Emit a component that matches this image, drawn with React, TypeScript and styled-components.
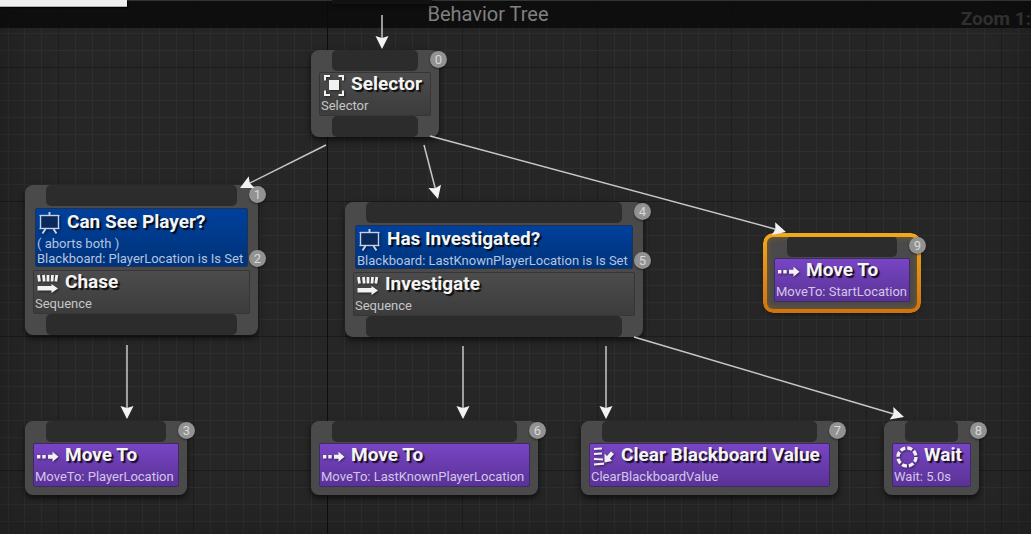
import React from "react";
import styled, { createGlobalStyle, css } from "styled-components";

const GlobalStyle = createGlobalStyle`
  *, *::before, *::after { box-sizing: border-box; }
  body {
    margin: 0;
    background: #262626;
    font-family: Roboto, "Liberation Sans", sans-serif;
  }
`;

const Editor = styled.main`
  position: relative;
  min-height: 100vh;
  overflow: hidden;
  background: #262626;
`;

const CanvasLayer = styled.svg`
  position: absolute;
  inset: 0;
  width: 100%;
  height: 100%;
  pointer-events: none;
`;

const Vignette = styled.div`
  position: absolute;
  inset: 0;
  pointer-events: none;
  box-shadow: inset 0 0 48px rgba(0, 0, 0, 0.28);
`;

const TitleBar = styled.header`
  position: relative;
  display: flex;
  justify-content: center;
  height: 28px;
  padding-right: 55px;
  border-top: 1px solid #333333;
  background: rgba(10, 10, 10, 0.82);
`;

const Title = styled.h1`
  margin: 0;
  font-size: 20px;
  font-weight: 400;
  line-height: 26px;
  color: #808080;
`;

const ZoomLabel = styled.span`
  position: absolute;
  top: 5px;
  right: 0;
  font-size: 19px;
  font-weight: 700;
  line-height: 26px;
  color: #303030;
`;

const MenuEdge = styled.div`
  position: absolute;
  top: 0;
  left: 0;
  width: 127px;
  height: 7px;
  border-bottom: 1px solid #b0b0b0;
  background: #eeeeee;
  box-shadow: 1px 1px 1px #000000;
`;

const RootEdge = styled.div`
  position: absolute;
  top: 0;
  left: 332px;
  width: 100px;
  height: 4px;
  background: #121212;
  box-shadow: 0 2px 4px #080808;
`;

const NodeCard = styled.article<{ $x: number; $y: number; $w: number; $selected?: boolean }>`
  position: absolute;
  left: ${(p) => p.$x}px;
  top: ${(p) => p.$y}px;
  width: ${(p) => p.$w}px;
  display: flex;
  flex-direction: column;
  padding: 0 8px;
  border-radius: 8px;
  background: #4a4a4a;
  box-shadow: 0 3px 6px rgba(0, 0, 0, 0.65);
  ${(p) =>
    p.$selected &&
    css`
      &::before {
        content: "";
        position: absolute;
        inset: -3px;
        border: 4px solid transparent;
        border-radius: 10px;
        background: linear-gradient(#f2a81c, #d0720f) border-box;
        mask: linear-gradient(#000 0 0) padding-box exclude, linear-gradient(#000 0 0);
      }
      box-shadow: inset 0 0 5px 2px #75592c, 0 3px 6px rgba(0, 0, 0, 0.65);
    `}
`;

const Pin = styled.div`
  height: 21px;
  margin: 0 13px;
  border-radius: 5px;
  background: #2c2c2c;
`;

const Stack = styled.div<{ $leaf?: boolean }>`
  display: flex;
  flex-direction: column;
  gap: 3px;
  padding: 1px 0 ${(p) => (p.$leaf ? 8 : 0)}px;
`;

type Tone = "service" | "plain" | "task";

const tones: Record<Tone, ReturnType<typeof css>> = {
  service: css`
    margin: 1px 2px 0;
    padding: 2px 1px 0;
    border-color: #1d3159;
    background: linear-gradient(#00409c, #003379);
    color: #b4c4e2;
  `,
  plain: css`
    border-color: #363636;
    background: linear-gradient(#4c4c4c, #3c3c3c);
    color: #c6c6c6;
  `,
  task: css`
    border-color: #3f2a66;
    background: linear-gradient(#7845c4, #5a3296);
    color: #d3c6ea;
  `,
};

const Panel = styled.section<{ $tone: Tone }>`
  position: relative;
  padding: 0 1px 2px;
  border: 1px solid;
  border-radius: 2px;
  ${(p) => tones[p.$tone]}
`;

const Heading = styled.div`
  display: flex;
  align-items: center;
  gap: 7px;
  height: 24px;
  margin-bottom: 1px;
  padding-left: 1px;
`;

const Name = styled.h2`
  margin: 0;
  padding-bottom: 2px;
  font-size: 19px;
  font-weight: 700;
  line-height: 22px;
  white-space: nowrap;
  color: #f4f4f4;
  text-shadow: 2px 2px 1px rgba(0, 0, 0, 0.8);
`;

const Detail = styled.p`
  margin: 0;
  font-size: 13px;
  line-height: 15px;
  white-space: nowrap;
`;

const Index = styled.span<{ $low?: boolean }>`
  position: absolute;
  top: ${(p) => (p.$low ? "auto" : "1px")};
  bottom: ${(p) => (p.$low ? "-1px" : "auto")};
  right: ${(p) => (p.$low ? "-19px" : "-8px")};
  width: 17px;
  height: 17px;
  border-radius: 50%;
  background: #929292;
  box-shadow: 0 1px 2px rgba(0, 0, 0, 0.5);
  font-size: 13px;
  line-height: 17px;
  text-align: center;
  color: #d8d8d8;
`;

const Glyph = styled.svg`
  flex: none;
  width: 22px;
  height: 22px;
  overflow: visible;
  filter: drop-shadow(1px 1px 1px rgba(0, 0, 0, 0.5));
`;

type IconName = "selector" | "board" | "sequence" | "move" | "clear" | "wait";

function Icon({ name }: { name: IconName }) {
  const white = "#f2f2f2";
  switch (name) {
    case "selector":
      return (
        <Glyph viewBox="0 0 22 22" aria-hidden="true">
          <rect x="7" y="6" width="10" height="10" fill={white} />
          <path d="M3 6.500V2h5M16.500 2H21v4.500M21 16.500V21h-4.500M8 21H3v-4.500" fill="none" stroke={white} strokeWidth="2" />
        </Glyph>
      );
    case "board":
      return (
        <Glyph viewBox="0 0 22 22" aria-hidden="true">
          <path d="M11.500 0v3M7.500 17l-3 4.500M15.500 17l3 4.500" stroke="#c5d2e8" strokeWidth="2" fill="none" />
          <rect x="2.500" y="3.500" width="18" height="13" fill="#0a2a5e" stroke="#c5d2e8" strokeWidth="1.4" />
          <path d="M1.500 3.500h20M1.500 16.500h20" stroke="#c5d2e8" strokeWidth="1.2" />
        </Glyph>
      );
    case "sequence":
      return (
        <Glyph viewBox="0 0 22 22" aria-hidden="true">
          <path d="M2.500 3l1 6.500M7.500 3l.7 6.500M12 3v6.500M16.500 3l-.5 6.500M20.800 3l-1 6.500" stroke={white} strokeWidth="2.800" fill="none" />
          <path d="M1.500 14h14V12l6.500 4.500l-6.500 4.500v-2.500h-14z" fill={white} />
        </Glyph>
      );
    case "move":
      return (
        <Glyph viewBox="0 0 22 22" aria-hidden="true">
          <path d="M1 10h3.400v3.500H1zM6.300 10h3.400v3.500H6.300zM12 9.800h4.500V6.800l6 5l-6 5V13.800H12z" fill={white} />
        </Glyph>
      );
    case "clear":
      return (
        <Glyph viewBox="0 0 22 22" aria-hidden="true">
          <path d="M2 4l8-.5M2 9l8-.5M2 14l9 .5M2 19.500l10-.8" stroke={white} strokeWidth="2.200" fill="none" />
          <path d="M12.500 17.500V8.500l2.500 2.500l4-4.500l3 2.500l-4 4.500l2 2.500z" fill={white} />
        </Glyph>
      );
    case "wait":
      return (
        <Glyph viewBox="0 0 22 22" aria-hidden="true">
          <circle cx="12" cy="12" r="9" fill="none" stroke={white} strokeWidth="3.400" strokeDasharray="5.070 2" />
        </Glyph>
      );
  }
}

interface Part {
  tone: Tone;
  icon: IconName;
  name: string;
  details: string[];
  index?: number;
}

interface TreeNode {
  x: number;
  y: number;
  w: number;
  index: number;
  leaf?: boolean;
  selected?: boolean;
  parts: Part[];
}

const nodes: TreeNode[] = [
  { x: 311, y: 50, w: 128, index: 0, parts: [{ tone: "plain", icon: "selector", name: "Selector", details: ["Selector"] }] },
  {
    x: 25, y: 185, w: 233, index: 1,
    parts: [
      { tone: "service", icon: "board", name: "Can See Player?", details: ["( aborts both )", "Blackboard: PlayerLocation is Is Set"], index: 2 },
      { tone: "plain", icon: "sequence", name: "Chase", details: ["Sequence"] },
    ],
  },
  {
    x: 345, y: 202, w: 298, index: 4,
    parts: [
      { tone: "service", icon: "board", name: "Has Investigated?", details: ["Blackboard: LastKnownPlayerLocation is Is Set"], index: 5 },
      { tone: "plain", icon: "sequence", name: "Investigate", details: ["Sequence"] },
    ],
  },
  { x: 766, y: 236, w: 152, index: 9, leaf: true, selected: true, parts: [{ tone: "task", icon: "move", name: "Move To", details: ["MoveTo: StartLocation"] }] },
  { x: 25, y: 421, w: 162, index: 3, leaf: true, parts: [{ tone: "task", icon: "move", name: "Move To", details: ["MoveTo: PlayerLocation"] }] },
  { x: 311, y: 421, w: 227, index: 6, leaf: true, parts: [{ tone: "task", icon: "move", name: "Move To", details: ["MoveTo: LastKnownPlayerLocation"] }] },
  { x: 581, y: 421, w: 257, index: 7, leaf: true, parts: [{ tone: "task", icon: "clear", name: "Clear Blackboard Value", details: ["ClearBlackboardValue"] }] },
  { x: 884, y: 421, w: 95, index: 8, leaf: true, parts: [{ tone: "task", icon: "wait", name: "Wait", details: ["Wait: 5.0s"] }] },
];

const wires: [number, number, number, number][] = [
  [382, 15, 382, 49],
  [326, 145, 240, 188],
  [424, 145, 438, 199],
  [430, 136, 786, 232],
  [127, 345, 127, 419],
  [463, 346, 463, 419],
  [606, 346, 606, 419],
  [634, 337, 904, 417],
];

const gridLines = Array.from({ length: 240 }, (_, i) => i);
const STEP = 404 / 24;

function Grid() {
  return (
    <CanvasLayer aria-hidden="true">
      {gridLines.map((i) => (
        <rect
          key={`v${i}`}
          x={Math.round(7.6 + i * STEP)}
          y="0"
          width="1"
          height="100%"
          fill={i % 8 === 3 ? "#1d1d1d" : "#2e2e2e"}
        />
      ))}
      {gridLines.map((i) => (
        <rect
          key={`h${i}`}
          x="0"
          y={Math.round(16 + i * STEP)}
          width="100%"
          height="1"
          fill={i % 8 === 3 ? "#1b1b1b" : "#2e2e2e"}
        />
      ))}
      <rect x="327" y="0" width="1" height="100%" fill="#0e0e0e" />
    </CanvasLayer>
  );
}

function Wires() {
  return (
    <CanvasLayer aria-hidden="true">
      {wires.map(([x1, y1, x2, y2], i) => {
        const angle = (Math.atan2(y2 - y1, x2 - x1) * 180) / Math.PI;
        const length = Math.hypot(x2 - x1, y2 - y1);
        return (
          <g key={i} transform={`translate(${x2} ${y2}) rotate(${angle})`}>
            <path d={`M${-length} 0H-8`} stroke="#c8c8c8" strokeWidth="1.5" />
            <path d="M0 0L-13 -6.500L-11 0L-13 6.500z" fill="#f2f2f2" />
          </g>
        );
      })}
    </CanvasLayer>
  );
}

function NodeView({ node }: { node: TreeNode }) {
  return (
    <NodeCard $x={node.x} $y={node.y} $w={node.w} $selected={node.selected}>
      <Pin />
      <Stack $leaf={node.leaf}>
        {node.parts.map((part) => (
          <Panel key={part.name} $tone={part.tone}>
            <Heading>
              <Icon name={part.icon} />
              <Name>{part.name}</Name>
            </Heading>
            {part.details.map((line) => (
              <Detail key={line}>{line}</Detail>
            ))}
            {part.index !== undefined && <Index $low>{part.index}</Index>}
          </Panel>
        ))}
      </Stack>
      {!node.leaf && <Pin />}
      <Index>{node.index}</Index>
    </NodeCard>
  );
}

export default function App() {
  return (
    <>
      <GlobalStyle />
      <Editor>
        <Grid />
        <Vignette />
        <TitleBar>
          <Title>Behavior Tree</Title>
          <ZoomLabel>Zoom 1:</ZoomLabel>
        </TitleBar>
        <RootEdge />
        <MenuEdge />
        {nodes.map((node) => (
          <NodeView key={node.index} node={node} />
        ))}
        <Wires />
      </Editor>
    </>
  );
}
